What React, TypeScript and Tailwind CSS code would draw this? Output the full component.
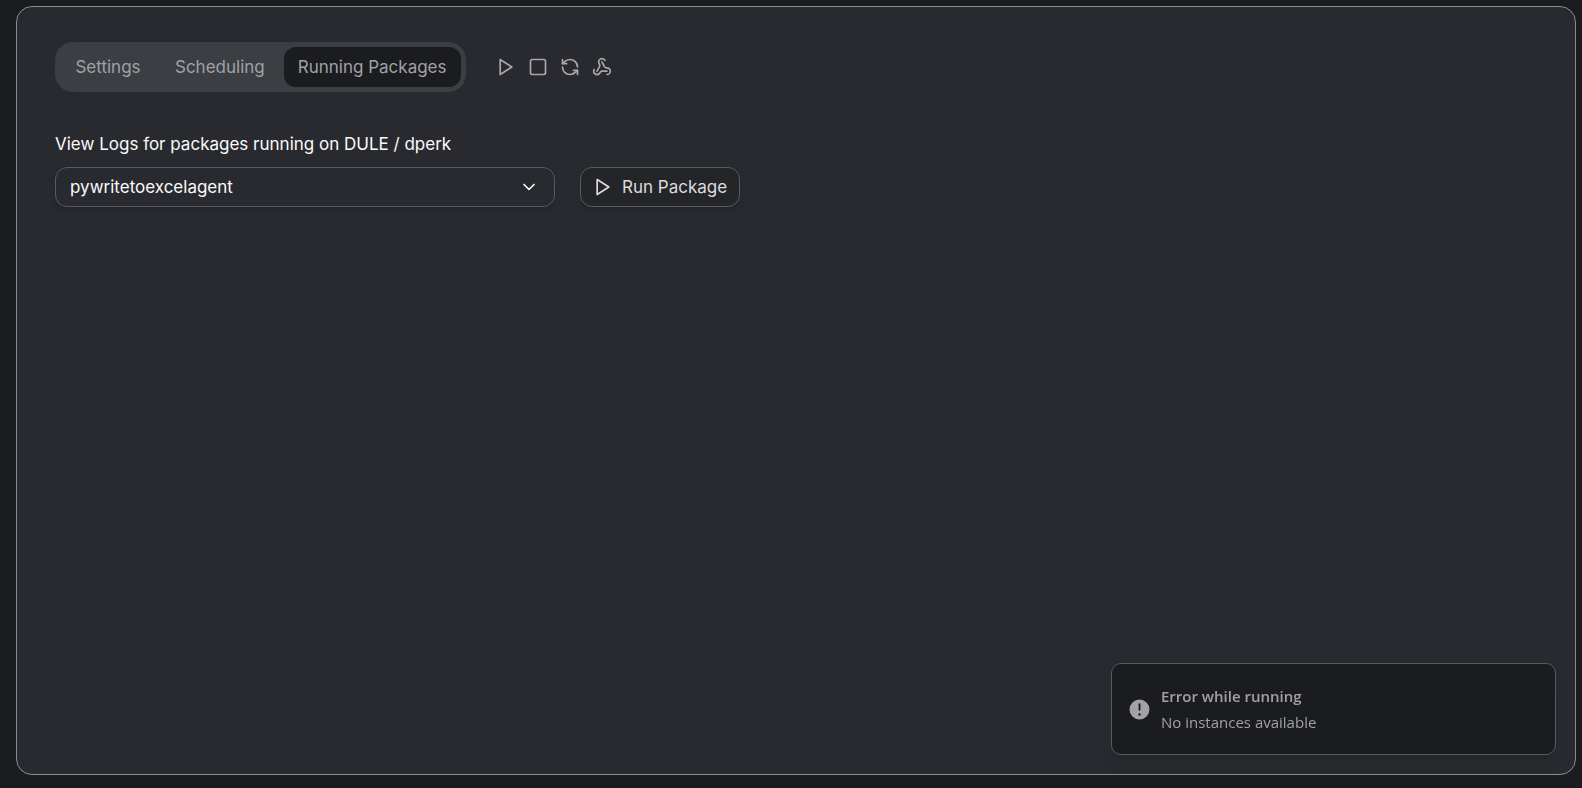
import React, { useState } from 'react';
import { ChevronDown, RefreshCcw, Square, Webhook } from 'lucide-react';
import clsx from 'clsx';

const tabs = ['Settings', 'Scheduling', 'Running Packages'];
const packages = ['pywritetoexcelagent'];

function PlayIcon({ className }: { className?: string }) {
  return (
    <svg
      viewBox="0 0 24 24"
      fill="none"
      stroke="currentColor"
      strokeWidth="2"
      strokeLinecap="round"
      strokeLinejoin="round"
      aria-hidden="true"
      className={className}
    >
      <polygon points="5 3 19 12 5 21 5 3" />
    </svg>
  );
}

function ErrorToast({ title, message }: { title: string; message: string }) {
  return (
    <div
      role="alert"
      className="fixed right-[26px] bottom-[33px] w-[445px] h-[92px] flex items-center gap-[9px] px-[15px] rounded-[10px] border border-[#5a5b60] bg-[#1b1c20] text-[#a1a1a6] shadow-lg font-['Open_Sans','Noto_Sans',sans-serif]"
    >
      <svg viewBox="0 0 20 20" fill="currentColor" aria-hidden="true" className="w-[25px] h-[25px] shrink-0">
        <path
          fillRule="evenodd"
          clipRule="evenodd"
          d="M18 10a8 8 0 11-16 0 8 8 0 0116 0zm-8-5a.75.75 0 01.75.75v4.5a.75.75 0 01-1.5 0v-4.5A.75.75 0 0110 5zm0 10a1 1 0 100-2 1 1 0 000 2z"
        />
      </svg>
      <div className="text-[15px] leading-[26px]">
        <div className="font-semibold">{title}</div>
        <div>{message}</div>
      </div>
    </div>
  );
}

export default function App() {
  const [activeTab, setActiveTab] = useState('Running Packages');
  const [selected, setSelected] = useState(packages[0]);

  return (
    <div className="min-h-screen flex bg-[#1b1c20] pl-4 pr-[6px] pt-[6px] pb-[13px] text-[17px] leading-6 font-[Inter,sans-serif]">
      <main className="flex-1 rounded-2xl border border-[#8a8b8f] bg-[#292a2f] px-[38px] py-[35px]">
        <div className="flex items-center gap-[30px]">
          <div role="tablist" className="flex gap-[5px] p-[5px] rounded-[18px] bg-[#3b3e42]">
            {tabs.map((tab) => (
              <button
                key={tab}
                type="button"
                role="tab"
                aria-selected={activeTab === tab}
                onClick={() => setActiveTab(tab)}
                className={clsx(
                  'h-10 min-w-24 px-[14px] rounded-xl text-[#a1a1a6]',
                  activeTab === tab && 'bg-[#1b1c20]'
                )}
              >
                {tab}
              </button>
            ))}
          </div>

          <div className="flex items-center gap-3 text-[#a8a8aa]">
            <button type="button" aria-label="Run">
              <PlayIcon className="w-5 h-5" />
            </button>
            <button type="button" aria-label="Stop">
              <Square className="w-5 h-5" />
            </button>
            <button type="button" aria-label="Restart">
              <RefreshCcw className="w-5 h-5" />
            </button>
            <button type="button" aria-label="Webhook">
              <Webhook className="w-5 h-5" />
            </button>
          </div>
        </div>

        <label htmlFor="package" className="block mt-10 text-[#fafafa]">
          View Logs for packages running on DULE / dperk
        </label>

        <div className="flex items-center gap-[25px] mt-[11px]">
          <div className="relative w-[500px]">
            <select
              id="package"
              value={selected}
              onChange={(e) => setSelected(e.target.value)}
              className="block w-full h-10 px-[14px] rounded-xl border border-[#5a5b60] bg-[#292a2f] text-[#fafafa] shadow-md appearance-none"
            >
              {packages.map((name) => (
                <option key={name} value={name}>
                  {name}
                </option>
              ))}
            </select>
            <ChevronDown className="absolute right-4 top-[10px] w-5 h-5 text-[#fafafa] pointer-events-none" />
          </div>

          <button
            type="button"
            className="flex items-center gap-[9px] h-10 px-3 rounded-xl border border-[#5a5b60] bg-[#242529] text-[#dcdcdd] shadow-md"
          >
            <PlayIcon className="w-5 h-5" />
            Run Package
          </button>
        </div>
      </main>

      <ErrorToast title="Error while running" message="No instances available" />
    </div>
  );
}
